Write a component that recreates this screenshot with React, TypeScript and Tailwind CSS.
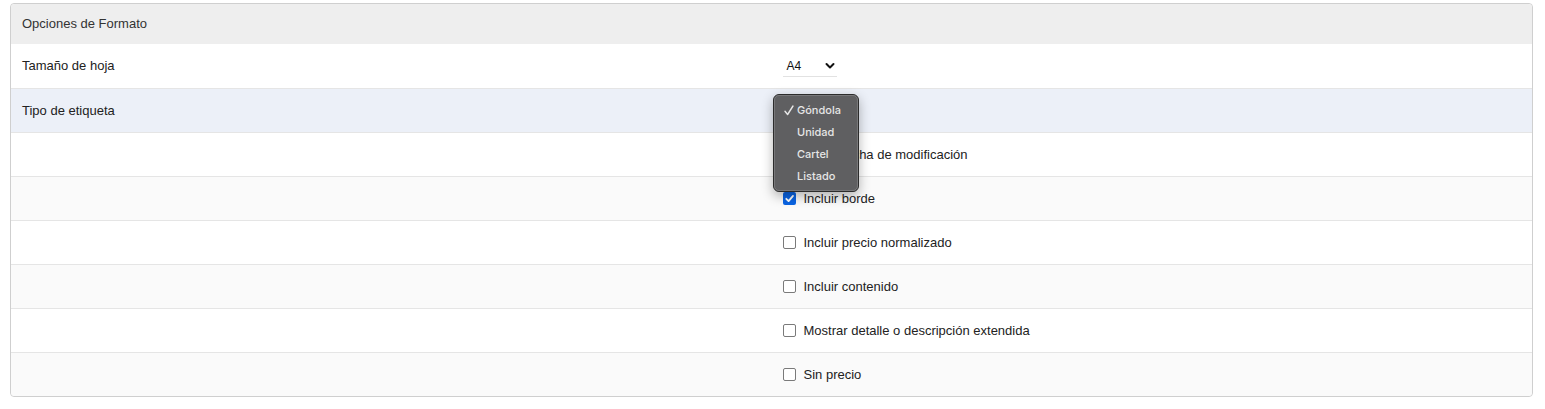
import React from "react";

const font = { fontFamily: '"Liberation Sans", Arial, sans-serif' };
const menuFont = { fontFamily: 'Inter, "Liberation Sans", Arial, sans-serif' };

function Checkbox({ checked }: { checked?: boolean }) {
  if (checked) {
    return (
      <span className="inline-flex h-[13px] w-[13px] items-center justify-center rounded-[2px] bg-[#0a64e4]">
        <svg width="11" height="11" viewBox="0 0 12 12">
          <path d="M2.5 6.3 L5 8.8 L9.8 3.2" fill="none" stroke="white" strokeWidth="2" strokeLinecap="round" strokeLinejoin="round" />
        </svg>
      </span>
    );
  }
  return <span className="inline-block h-[13px] w-[13px] rounded-[2px] border border-[#7a7a7a] bg-white" />;
}

function Row({ label, children, bg }: { label?: string; children?: React.ReactNode; bg: string }) {
  return (
    <div className={`grid h-[44px] grid-cols-2 items-center border-t border-[#e5e5e5] ${bg}`}>
      <div className="pl-[11px] text-[13px] text-[#222]">{label}</div>
      <div className="pl-[11px] text-[13px] text-[#222]">{children}</div>
    </div>
  );
}

function Check({ checked, text }: { checked?: boolean; text: string }) {
  return (
    <label className="flex items-center gap-[8px]">
      <Checkbox checked={checked} />
      <span>{text}</span>
    </label>
  );
}

function SelectBox({ value }: { value: string }) {
  return (
    <div className="flex h-[22px] w-[54px] items-center justify-between border-b border-[#e2e2e2] pl-[4px] pr-[2px]">
      <span className="text-[12px] text-[#111]">{value}</span>
      <svg width="10" height="8" viewBox="0 0 10 8">
        <path d="M1.5 2 L5 5.5 L8.5 2" fill="none" stroke="#111" strokeWidth="2" strokeLinecap="round" strokeLinejoin="round" />
      </svg>
    </div>
  );
}

export default function App() {
  const items = ["Góndola", "Unidad", "Cartel", "Listado"];
  return (
    <div className="min-h-[409px] bg-white pt-[3px]" style={font}>
      <div className="relative ml-[10px] w-[1523px] overflow-visible rounded-[4px] border border-[#cfcfcf]">
        <div className="flex h-[40px] items-center rounded-t-[4px] bg-[#eeeeee] pb-[1px] pl-[11px] text-[13px] text-[#333]">
          Opciones de Formato
        </div>
        <div className="grid h-[44px] grid-cols-2 items-center bg-white">
          <div className="pb-[1px] pl-[11px] text-[13px] text-[#222]">Tamaño de hoja</div>
          <div className="pl-[11px]">
            <SelectBox value="A4" />
          </div>
        </div>
        <Row label="Tipo de etiqueta" bg="bg-[#ecf0f8]">
          <div className="invisible">
            <SelectBox value="Góndola" />
          </div>
        </Row>
        <Row bg="bg-white">
          <Check text="Incluir fecha de modificación" />
        </Row>
        <Row bg="bg-[#fafafa]">
          <Check checked text="Incluir borde" />
        </Row>
        <Row bg="bg-white">
          <Check text="Incluir precio normalizado" />
        </Row>
        <Row bg="bg-[#fafafa]">
          <Check text="Incluir contenido" />
        </Row>
        <Row bg="bg-white">
          <Check text="Mostrar detalle o descripción extendida" />
        </Row>
        <div className="grid h-[44px] grid-cols-2 items-center rounded-b-[4px] border-t border-[#e5e5e5] bg-[#fafafa]">
          <div />
          <div className="pl-[11px] text-[13px] text-[#222]">
            <Check text="Sin precio" />
          </div>
        </div>

        <div
          className="absolute left-[762px] top-[90px] w-[86px] rounded-[6px] border border-[#2c2c2c] bg-[#5f5f61] py-[4px] shadow-[0_4px_12px_rgba(0,0,0,0.3)]"
          style={menuFont}
        >
          <div className="pointer-events-none absolute inset-0 rounded-[5px] border border-[#78787a]" />
          {items.map((it, i) => (
            <div key={it} className="relative flex h-[22px] items-center text-[11px] font-medium text-[#e6e6e6]">
              <span className="flex w-[23px] items-center pl-[10px]">
                {i === 0 ? (
                  <svg width="10" height="11" viewBox="0 0 10 11">
                    <path d="M1 6.2 L3.6 9.5 L9 1" fill="none" stroke="#e6e6e6" strokeWidth="1.4" strokeLinecap="round" strokeLinejoin="round" />
                  </svg>
                ) : null}
              </span>
              <span>{it}</span>
            </div>
          ))}
        </div>
      </div>
    </div>
  );
}
